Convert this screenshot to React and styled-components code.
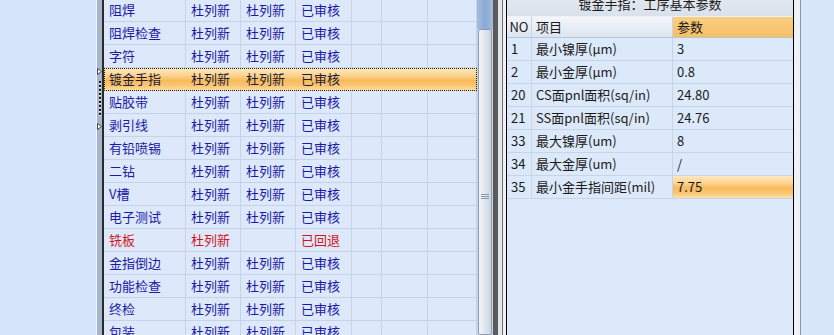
import React from "react";
import styled, { createGlobalStyle, css } from "styled-components";

const GlobalStyle = createGlobalStyle`
  html, body {
    margin: 0;
    padding: 0;
  }
  body {
    font-family: "Noto Sans CJK SC", "Noto Sans", sans-serif;
    font-size: 13px;
    background: #d9e7fa;
    overflow: hidden;
  }
`;

const processes = [
  { name: "阻焊", maker: "杜列新", checker: "杜列新", state: "已审核" },
  { name: "阻焊检查", maker: "杜列新", checker: "杜列新", state: "已审核" },
  { name: "字符", maker: "杜列新", checker: "杜列新", state: "已审核" },
  { name: "镀金手指", maker: "杜列新", checker: "杜列新", state: "已审核", selected: true },
  { name: "贴胶带", maker: "杜列新", checker: "杜列新", state: "已审核" },
  { name: "剥引线", maker: "杜列新", checker: "杜列新", state: "已审核" },
  { name: "有铅喷锡", maker: "杜列新", checker: "杜列新", state: "已审核" },
  { name: "二钻", maker: "杜列新", checker: "杜列新", state: "已审核" },
  { name: "V槽", maker: "杜列新", checker: "杜列新", state: "已审核" },
  { name: "电子测试", maker: "杜列新", checker: "杜列新", state: "已审核" },
  { name: "铣板", maker: "杜列新", checker: "", state: "已回退", rejected: true },
  { name: "金指倒边", maker: "杜列新", checker: "杜列新", state: "已审核" },
  { name: "功能检查", maker: "杜列新", checker: "杜列新", state: "已审核" },
  { name: "终检", maker: "杜列新", checker: "杜列新", state: "已审核" },
  { name: "包装", maker: "杜列新", checker: "杜列新", state: "已审核" },
];

const params = [
  { no: "1", item: "最小镍厚(μm)", value: "3" },
  { no: "2", item: "最小金厚(μm)", value: "0.8" },
  { no: "20", item: "CS面pnl面积(sq/in)", value: "24.80" },
  { no: "21", item: "SS面pnl面积(sq/in)", value: "24.76" },
  { no: "33", item: "最大镍厚(um)", value: "8" },
  { no: "34", item: "最大金厚(um)", value: "/" },
  { no: "35", item: "最小金手指间距(mil)", value: "7.75", selected: true },
];

const orangeGloss = css`
  background: linear-gradient(
    to bottom,
    #fee8c2 0%,
    #fcd595 30%,
    #f8ba58 55%,
    #fac777 78%,
    #fde0aa 100%
  );
`;

const Screen = styled.div`
  display: flex;
  height: 335px;
  overflow: hidden;
`;

const SidePane = styled.div`
  width: 96px;
  background: #d5e4f8;
`;

const GripStrip = styled.div`
  width: 8px;
  box-sizing: border-box;
  border-left: 1px solid #eef4fd;
  border-right: 2px solid #2a2a2a;
  background: #a4b5cd;
  display: flex;
  flex-direction: column;
  align-items: center;
  padding-top: 68px;
  gap: 6px;
`;

const GripDots = styled.div`
  width: 2px;
  height: 36px;
  background: repeating-linear-gradient(
    to bottom,
    #1c1c1c 0 2px,
    #eef2f8 2px 3px,
    transparent 3px 4px
  );
`;

const GripArrow = () => (
  <svg width="5" height="7" viewBox="0 0 5 7">
    <polygon points="0.5,0.5 4.5,3.5 0.5,6.5" fill="#ffffff" stroke="#3a4454" strokeWidth="1" />
  </svg>
);

const Grid = styled.div`
  width: 373px;
  background: #dde9fa;
  overflow: hidden;
`;

const GridBody = styled.div`
  margin-top: -1px;
`;

const GridRow = styled.div`
  display: grid;
  grid-template-columns: 82px 55px 55px 56px 30px 46px 49px;
  height: 23px;
  box-sizing: border-box;
  color: ${(p) => (p.$rejected ? "#d4141c" : p.$selected ? "#1c1c3a" : "#1a1aa8")};
  ${(p) =>
    p.$selected &&
    css`
      ${orangeGloss};
      outline: 1px dotted #1a1a1a;
      outline-offset: -1px;
    `}
`;

const GridCell = styled.div`
  box-sizing: border-box;
  padding-left: 5px;
  line-height: 22px;
  white-space: nowrap;
  border-right: 1px solid ${(p) => (p.$selected ? "transparent" : "#c3d3e8")};
  border-bottom: 1px solid ${(p) => (p.$selected ? "transparent" : "#c3d3e8")};
`;

const VScroll = styled.div`
  width: 16px;
  display: flex;
  flex-direction: column;
  background: #c8d5e6;
`;

const ScrollTrack = styled.div`
  height: 29px;
  background: linear-gradient(to right, #a6bedf, #8aa9d3 50%, #a3bcdd);
`;

const ScrollThumb = styled.div`
  flex: 1;
  margin: 0 1px;
  border: 1px solid #8c9eb7;
  border-radius: 2px;
  background: linear-gradient(to right, #f3f6fa, #e0e6ee 50%, #c9d3e0);
  display: flex;
  flex-direction: column;
  align-items: center;
  padding-top: 164px;
`;

const ThumbGrip = styled.div`
  width: 8px;
  height: 6px;
  background: repeating-linear-gradient(
    to bottom,
    #8b98aa 0 1px,
    transparent 1px 2px
  );
`;

const Splitter = styled.div`
  width: 14px;
  background: linear-gradient(
    to right,
    #5a5a5a 0 5px,
    #e2e6ec 5px 9px,
    #6e6e6e 9px 10px,
    #eff1f5 10px 13px,
    #000000 13px 14px
  );
`;

const DetailPanel = styled.div`
  width: 286px;
  background: #dce9fb;
  color: #1a1a1a;
`;

const TitleBar = styled.div`
  height: 24px;
  margin-top: -8px;
  line-height: 24px;
  text-align: center;
  background: linear-gradient(to bottom, #e6ebf2, #d9e1eb);
  border-bottom: 1px solid #eef2f7;
  color: #1a1a1a;
`;

const ParamRow = styled.div`
  display: grid;
  grid-template-columns: 25px 141px 120px;
  height: ${(p) => (p.$header ? "21px" : "23px")};
  box-sizing: border-box;
  border-bottom: 1px solid ${(p) => (p.$header ? "#b6c5d8" : "#c6d4e6")};
  ${(p) =>
    p.$header &&
    css`
      background: linear-gradient(to bottom, #f3f6fb, #dce5f0);
    `}
`;

const ParamCell = styled.div`
  box-sizing: border-box;
  padding-left: ${(p) => (p.$center ? "0" : "4px")};
  text-align: ${(p) => (p.$center ? "center" : "left")};
  line-height: ${(p) => (p.$header ? "20px" : "22px")};
  white-space: nowrap;
  overflow: hidden;
  border-right: 1px solid ${(p) => (p.$last ? "transparent" : "#c6d4e6")};
  ${(p) => p.$hot && orangeGloss};
  ${(p) =>
    p.$accent &&
    css`
      background: linear-gradient(to bottom, #f9cf82, #f6c064);
    `}
`;

const PanelFrame = styled.div`
  width: 8px;
  background: linear-gradient(
    to right,
    #000000 0 1px,
    #eef1f5 1px 7px,
    #8f97a3 7px 8px
  );
`;

const OuterPane = styled.div`
  flex: 1;
  background: #d9e7fa;
`;

export default function App() {
  return (
    <>
      <GlobalStyle />
      <Screen>
        <SidePane />
        <GripStrip>
          <GripArrow />
          <GripDots />
          <GripArrow />
        </GripStrip>
        <Grid>
          <GridBody>
            {processes.map((p) => (
              <GridRow key={p.name} $selected={p.selected} $rejected={p.rejected}>
                <GridCell $selected={p.selected}>{p.name}</GridCell>
                <GridCell $selected={p.selected}>{p.maker}</GridCell>
                <GridCell $selected={p.selected}>{p.checker}</GridCell>
                <GridCell $selected={p.selected}>{p.state}</GridCell>
                <GridCell $selected={p.selected} />
                <GridCell $selected={p.selected} />
                <GridCell $selected={p.selected} />
              </GridRow>
            ))}
          </GridBody>
        </Grid>
        <VScroll>
          <ScrollTrack />
          <ScrollThumb>
            <ThumbGrip />
          </ScrollThumb>
        </VScroll>
        <Splitter />
        <DetailPanel>
          <TitleBar>镀金手指：工序基本参数</TitleBar>
          <ParamRow $header>
            <ParamCell $header $center>NO</ParamCell>
            <ParamCell $header>项目</ParamCell>
            <ParamCell $header $last $accent>参数</ParamCell>
          </ParamRow>
          {params.map((r) => (
            <ParamRow key={r.no}>
              <ParamCell>{r.no}</ParamCell>
              <ParamCell>{r.item}</ParamCell>
              <ParamCell $last $hot={r.selected}>{r.value}</ParamCell>
            </ParamRow>
          ))}
        </DetailPanel>
        <PanelFrame />
        <OuterPane />
      </Screen>
    </>
  );
}
